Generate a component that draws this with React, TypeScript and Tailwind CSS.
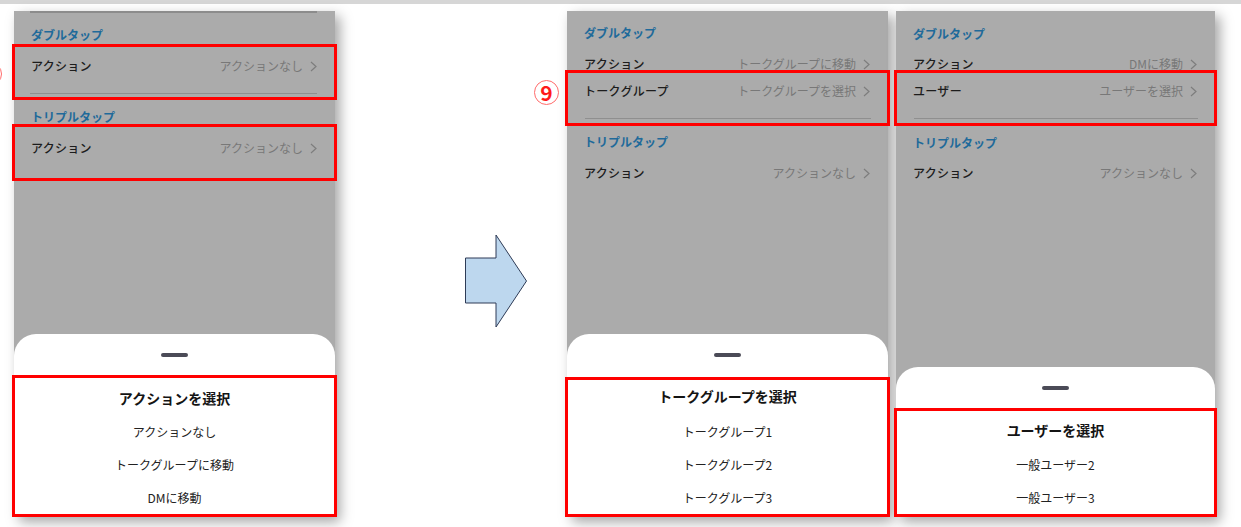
import React from "react";

const Chevron = () => (
  <svg width="7" height="11" viewBox="0 0 7 11" className="shrink-0">
    <polyline points="1,1 6,5.5 1,10" fill="none" stroke="#7d7d7d" strokeWidth="1.2" />
  </svg>
);

const Header = ({ text, cls }: { text: string; cls: string }) => (
  <div className={`pl-[17px] text-[12px] leading-[16px] font-bold text-[#1f6a9a] ${cls}`}>{text}</div>
);

const Row = ({ label, value, cls, inside }: { label: string; value: string; cls: string; inside?: boolean }) => (
  <div className={`flex items-center justify-between ${inside ? "pl-[16px] pr-[17px]" : "pl-[17px] pr-[18px]"} ${cls}`}>
    <span className="text-[12px] leading-[16px] font-medium text-[#1c1c1c] tracking-[0.3px]">{label}</span>
    <span className="flex items-center gap-[7px] text-[12px] leading-[16px] text-[#787878]">
      {value}
      <Chevron />
    </span>
  </div>
);

const Divider = ({ cls }: { cls: string }) => <div className={`h-px bg-[#8f8f8f] ${cls}`} />;

const RedBox = ({ children, cls }: { children: React.ReactNode; cls?: string }) => (
  <div className={`-mx-[2px] border-[3px] border-[#ff0000] ${cls ?? ""}`}>{children}</div>
);

const Sheet = ({ title, items, headH, titleCls }: { title: string; items: string[]; headH: string; titleCls: string }) => (
  <div className="mt-auto bg-white rounded-t-[22px]">
    <div className={`${headH} flex justify-center pt-[19px]`}>
      <div className="w-[27px] h-[4px] rounded-full bg-[#4b4b57]" />
    </div>
    <RedBox>
      <div className={`text-center text-[14px] leading-[20px] font-bold text-[#141414] ${titleCls}`}>{title}</div>
      {items.map((it) => (
        <div key={it} className="h-[33px] flex items-center justify-center text-[12px] leading-[16px] text-[#222]">
          {it}
        </div>
      ))}
    </RedBox>
  </div>
);

const Panel = ({ children, w }: { children: React.ReactNode; w: string }) => (
  <div className={`${w} h-[506px] shrink-0 bg-[#ababab] flex flex-col shadow-[5px_5px_12px_rgba(0,0,0,0.35)]`}>
    {children}
  </div>
);

export default function App() {
  return (
    <div className="w-[1241px] h-[527px] bg-white overflow-hidden font-['Noto_Sans_CJK_JP','Noto_Sans',sans-serif]">
      <div className="h-[4px] bg-[#d6d6d6]" />
      <div className="flex items-start pt-[7px]">
        <div className="w-[14px] shrink-0">
          <div className="-ml-[22px] mt-[51px] w-[24px] h-[24px] rounded-full border border-[#ff6b6b]" />
        </div>

        <Panel w="w-[321px]">
          <div className="h-[2px] bg-[#8c8c8c] ml-[16px] mr-[18px]" />
          <Header text="ダブルタップ" cls="h-[31px] pt-[14px]" />
          <RedBox>
            <Row label="アクション" value="アクションなし" cls="h-[38px]" inside />
            <Divider cls="mt-[8px] mb-[3px] ml-[15px] mr-[17px]" />
          </RedBox>
          <Header text="トリプルタップ" cls="h-[24px] pt-[9px]" />
          <RedBox>
            <Row label="アクション" value="アクションなし" cls="h-[42px] mb-[9px]" inside />
          </RedBox>
          <Sheet
            title="アクションを選択"
            items={["アクションなし", "トークグループに移動", "DMに移動"]}
            headH="h-[41px]"
            titleCls="h-[37px] pt-[10px]"
          />
        </Panel>

        <div className="w-[232px] shrink-0 h-[506px] flex flex-col">
          <div className="ml-[199px] mt-[69px] w-[25px] h-[25px] rounded-full border border-[#ff6b6b] flex items-center justify-center text-[#ff1a1a] text-[21px] font-semibold leading-none">
            9
          </div>
          <svg width="64" height="96" viewBox="0 0 64 96" className="ml-[130px] mt-[129px]">
            <polygon
              points="0.5,24 31,24 31,1 61.5,47 31,93 31,69 0.5,69"
              fill="#bdd7ee"
              stroke="#2e3b56"
              strokeWidth="1"
            />
          </svg>
        </div>

        <Panel w="w-[321px]">
          <Header text="ダブルタップ" cls="h-[38px] pt-[14px]" />
          <Row label="アクション" value="トークグループに移動" cls="h-[30px]" />
          <RedBox cls="-mt-[9px]">
            <Row label="トークグループ" value="トークグループを選択" cls="h-[36px]" inside />
            <Divider cls="mt-[9px] mb-[4px] ml-[17px] mr-[16px]" />
          </RedBox>
          <Header text="トリプルタップ" cls="h-[32px] pt-[8px]" />
          <Row label="アクション" value="アクションなし" cls="h-[30px]" />
          <Sheet
            title="トークグループを選択"
            items={["トークグループ1", "トークグループ2", "トークグループ3"]}
            headH="h-[43px]"
            titleCls="h-[35px] pt-[6px]"
          />
        </Panel>

        <div className="w-[8px] shrink-0" />

        <Panel w="w-[319px]">
          <Header text="ダブルタップ" cls="h-[38px] pt-[15px]" />
          <Row label="アクション" value="DMに移動" cls="h-[30px]" />
          <RedBox cls="-mt-[9px]">
            <Row label="ユーザー" value="ユーザーを選択" cls="h-[36px]" inside />
            <Divider cls="mt-[9px] mb-[4px] ml-[17px] mr-[16px]" />
          </RedBox>
          <Header text="トリプルタップ" cls="h-[32px] pt-[9px]" />
          <Row label="アクション" value="アクションなし" cls="h-[30px]" />
          <Sheet
            title="ユーザーを選択"
            items={["一般ユーザー2", "一般ユーザー3"]}
            headH="h-[41px]"
            titleCls="h-[37px] pt-[9px]"
          />
        </Panel>
      </div>
    </div>
  );
}
